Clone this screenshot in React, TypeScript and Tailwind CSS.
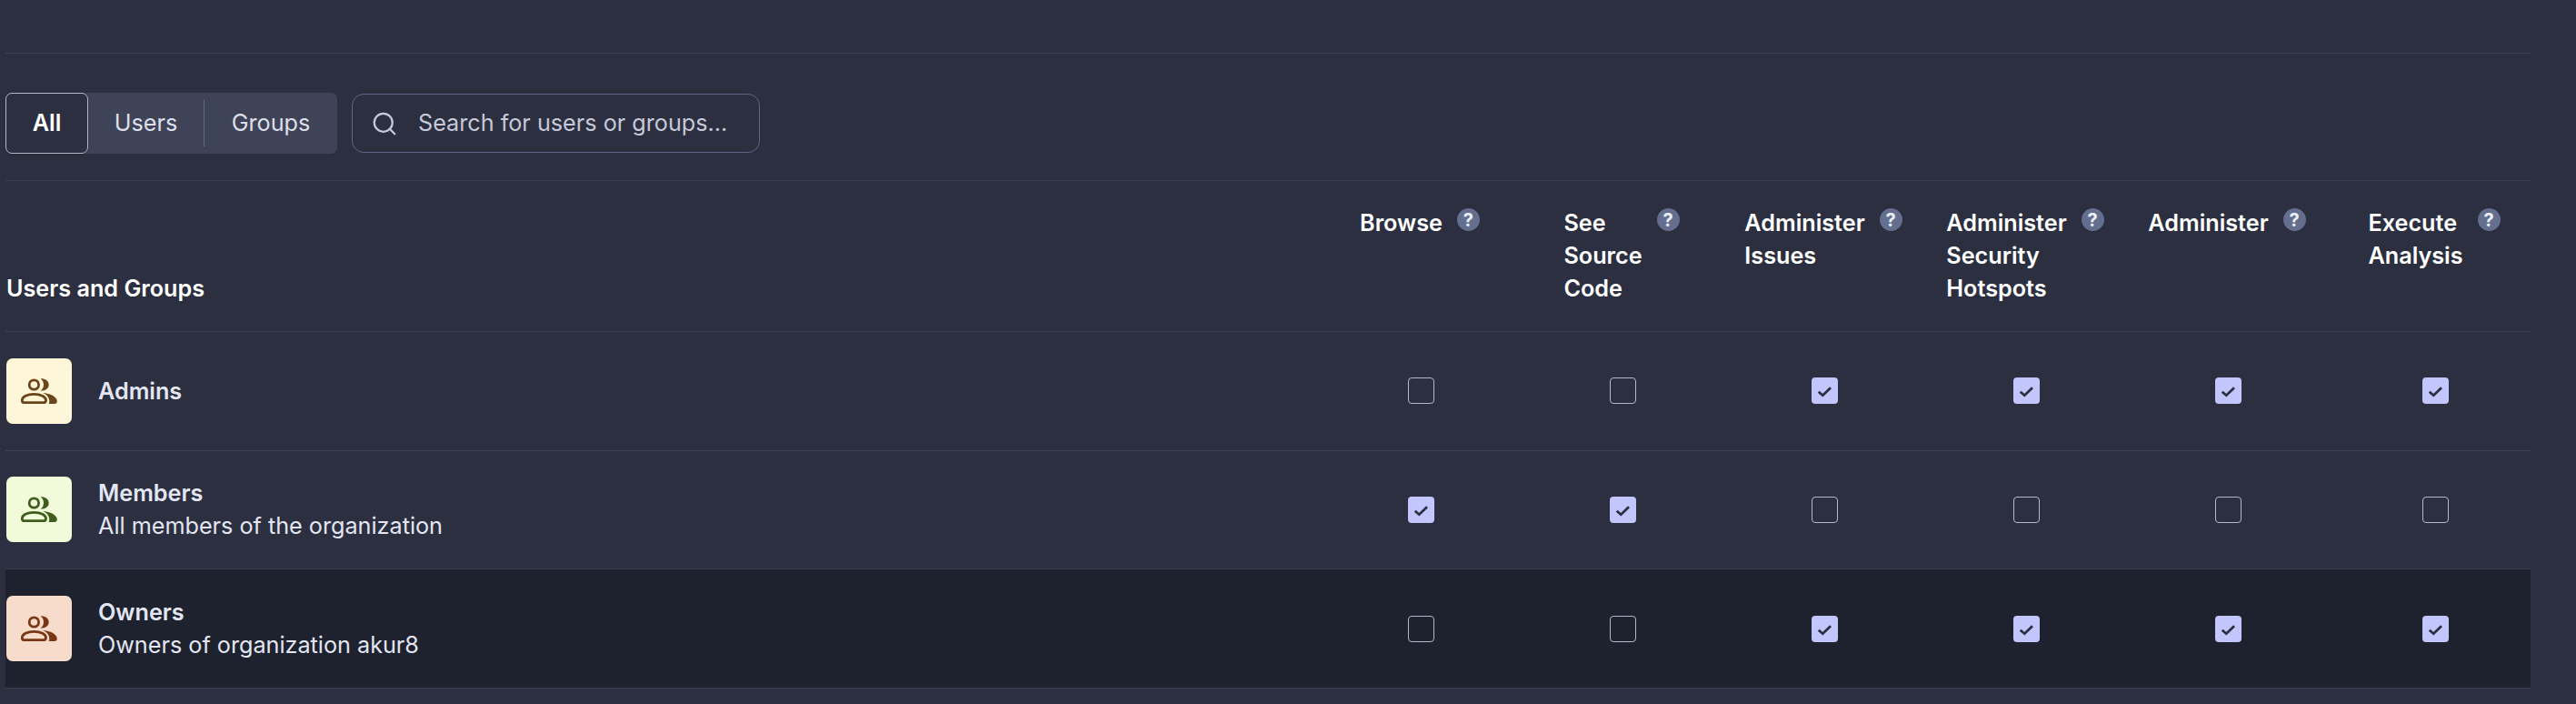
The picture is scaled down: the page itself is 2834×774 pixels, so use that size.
import { Search } from "lucide-react";

const columns = [
  "Browse",
  "See Source Code",
  "Administer Issues",
  "Administer Security Hotspots",
  "Administer",
  "Execute Analysis",
];

const groups = [
  {
    name: "Admins",
    description: "",
    rowHeight: "h-[131px] pb-px",
    iconBox: "bg-[#fdf6d8] text-[#6b4519]",
    checks: [false, false, true, true, true, true],
    selected: false,
  },
  {
    name: "Members",
    description: "All members of the organization",
    rowHeight: "h-[130px] pb-px",
    iconBox: "bg-[#f2fbd9] text-[#3f5d1e]",
    checks: [true, true, false, false, false, false],
    selected: false,
  },
  {
    name: "Owners",
    description: "Owners of organization akur8",
    rowHeight: "h-[131px]",
    iconBox: "bg-[#f8dccb] text-[#793716]",
    checks: [false, false, true, true, true, true],
    selected: true,
  },
];

const PeopleIcon = () => (
  <svg width="40" height="28" viewBox="0 0 40 28" fill="none">
    <circle cx="14.4" cy="7" r="5.2" stroke="currentColor" strokeWidth="2.8" />
    <path d="M21.7.3C27 .3 30.7 3 30.7 7S27 13.7 21.7 13.7C23.800 12 25 9.700 25 7S23.800 2 21.700.3Z" fill="currentColor" />
    <path
      d="M1.3 24c0-4 5.700-6.700 13.100-6.700S27.500 20 27.500 24c0 2-1 2.700-2.500 2.700H3.500C2 26.700 1.300 26 1.300 24Z"
      stroke="currentColor"
      strokeWidth="2.800"
    />
    <path d="M24 16c8 .5 15.800 4 15.800 9.200 0 1.800-1.200 2.800-2.800 2.800h-6.400c.6-1.200.9-2.700.5-4.500C30.400 20 28 17.500 24 16Z" fill="currentColor" />
  </svg>
);

const Checkbox = ({ checked }: { checked: boolean }) =>
  checked ? (
    <div className="w-[29px] h-[29px] rounded-[4px] bg-[#c2c6fd]">
      <svg width="29" height="29" viewBox="0 0 29 29" fill="none">
        <path d="M7.700 15.700l4.600 4 8.700-8.400" stroke="#2b2f40" strokeWidth="2.800" />
      </svg>
    </div>
  ) : (
    <div className="w-[29px] h-[29px] rounded-[4px] border border-[#b4b7c9]" />
  );

const HelpDot = () => (
  <span className="mt-[2px] flex h-[25px] w-[25px] shrink-0 items-center justify-center rounded-full bg-[#646e8e] text-[20px] font-bold leading-none text-[#eceef6]">
    ?
  </span>
);

export default function App() {
  return (
    <div className="h-[774px] overflow-hidden bg-[#2c2f3f] pl-[6px] pt-[58px] font-['Inter',sans-serif] text-[25.2px] leading-[36px]">
      <div className="w-[2778px]">
        <div className="flex items-center gap-[16px] border-t border-[#3e4153] pb-[29px] pt-[43px]">
          <div className="flex h-[67px] w-[365px] items-center rounded-[7px] bg-[#3f4357] pb-px">
            <div className="-mb-px flex h-[67px] w-[91px] items-center justify-center rounded-[7px] border border-[#b4b7c9] bg-[#2c2f3f] pb-[2px] font-semibold text-white shadow-sm">
              All
            </div>
            <div className="flex w-[127px] justify-center text-[#dddfeb]">Users</div>
            <div className="h-[51px] w-px bg-[#646a84]" />
            <div className="flex flex-1 justify-center text-[#dddfeb]">Groups</div>
          </div>
          <div className="flex h-[65px] w-[449px] items-center gap-[22px] rounded-[13px] border border-[#5f6684] pl-[20px] text-[#c6c9d9]">
            <Search size={30} strokeWidth={1.8} className="shrink-0" />
            <span className="pb-[2px]">Search for users or groups...</span>
          </div>
        </div>

        <div className="grid h-[166px] grid-cols-[1445px_repeat(6,222px)] items-start border-t border-[#3e4153] pt-[28px] font-semibold text-white">
          <div className="self-end pb-[29px] pl-px">Users and Groups</div>
          {columns.map((column, i) => (
            <div key={column} className={i === 5 ? "flex justify-center gap-[16px] pl-[12px]" : "flex justify-center gap-[16px]"}>
              <div className="w-min">{column}</div>
              <HelpDot />
            </div>
          ))}
        </div>

        {groups.map((group) => (
          <div
            key={group.name}
            className={`grid grid-cols-[1446px_repeat(6,222px)] items-center border-t border-[#3e4153] ${group.rowHeight} ${group.selected ? "bg-[#1e222e]" : ""}`}
          >
            <div className="flex items-center gap-[29px] pl-px">
              <div className={`flex h-[72px] w-[72px] items-center justify-center rounded-[7px] ${group.iconBox}`}>
                <PeopleIcon />
              </div>
              <div className="text-[#e3e6f3]">
                <div className="font-semibold">{group.name}</div>
                {group.description && <div>{group.description}</div>}
              </div>
            </div>
            {group.checks.map((checked, i) => (
              <div key={i} className={i === 5 ? "flex justify-center pl-[12px]" : "flex justify-center"}>
                <Checkbox checked={checked} />
              </div>
            ))}
          </div>
        ))}
        <div className="border-t border-[#3e4153]" />
      </div>
    </div>
  );
}
